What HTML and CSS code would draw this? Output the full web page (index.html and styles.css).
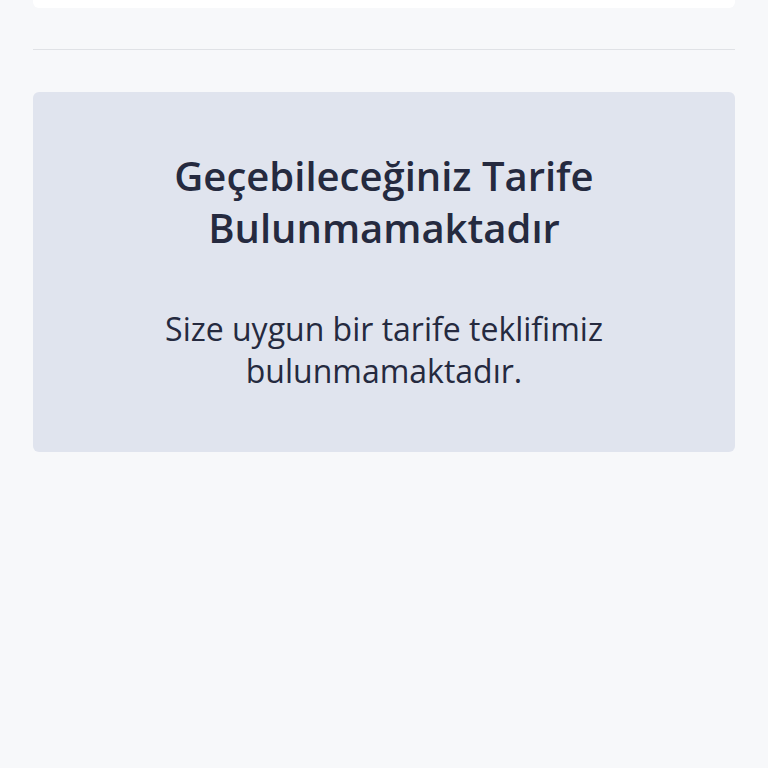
FILE: index.html
```html
<!DOCTYPE html>
<html lang="tr">
<head>
    <meta charset="UTF-8">
    <meta name="viewport" content="width=device-width, initial-scale=1.0">
    <title>Tarifeler</title>
    <link rel="stylesheet" href="styles.css">
</head>
<body>
    <div class="page">
        <div class="top-card"></div>
        <hr class="divider">
        <div class="empty-box">
            <h2 class="empty-title">Geçebileceğiniz Tarife<br>Bulunmamaktadır</h2>
            <p class="empty-text">Size uygun bir tarife teklifimiz<br>bulunmamaktadır.</p>
        </div>
    </div>
</body>
</html>
```

FILE: styles.css
```css
body {
    margin: 0;
    background-color: #f7f8fa;
    font-family: 'Open Sans', 'Noto Sans', sans-serif;
    color: #252a3f;
}
.page {
    padding: 0 33px;
}
.top-card {
    height: 8px;
    background-color: #ffffff;
    border-radius: 0 0 6px 6px;
}
.divider {
    border: none;
    border-top: 1.5px solid #e0e2e6;
    margin: 41px 0 0 0;
}
.empty-box {
    margin-top: 42px;
    background-color: #e0e4ee;
    border-radius: 6px;
    height: 360px;
    box-sizing: border-box;
    padding-top: 58px;
    text-align: center;
}
.empty-title {
    margin: 0;
    font-size: 40px;
    line-height: 52px;
    font-weight: 600;
}
.empty-text {
    margin: 54px 0 0 0;
    font-size: 32px;
    line-height: 42px;
    font-weight: 400;
}
```
